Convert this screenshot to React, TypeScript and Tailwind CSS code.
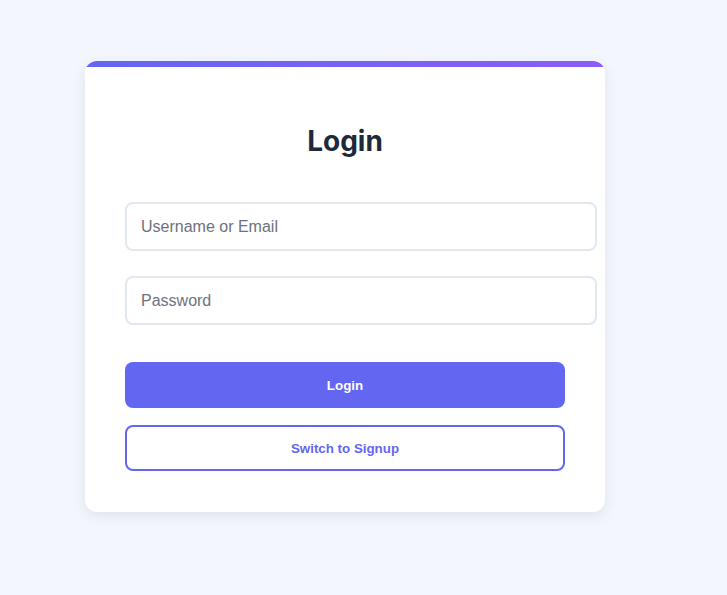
import { useState } from 'react'

export default function App() {
  const [username, setUsername] = useState('')
  const [password, setPassword] = useState('')

  return (
    <div className="min-h-[595px] w-full bg-[#f3f7fd] pl-[85px] pt-[61px] font-['Liberation_Sans',Arial,sans-serif]">
      <div className="w-[520px] overflow-hidden rounded-xl bg-white shadow-[0_4px_14px_rgba(15,23,42,0.09)]">
        <div className="h-[6px] bg-gradient-to-r from-[#6366f1] to-[#8b5cf6]" />
        <div className="px-10 pb-[41px] pt-[57px]">
          <h2 className="mb-[44px] text-center font-['Inter',sans-serif] text-[28px] font-bold leading-[34px] text-[#1e293b]">
            Login
          </h2>

          <input
            type="text"
            value={username}
            onChange={(e) => setUsername(e.target.value)}
            placeholder="Username or Email"
            className="mb-[25px] block h-[49px] w-[472px] rounded-lg border-2 border-[#e2e8f0] px-[14px] text-base text-[#1e293b] outline-none placeholder:text-[#6e7180]"
          />
          <input
            type="password"
            value={password}
            onChange={(e) => setPassword(e.target.value)}
            placeholder="Password"
            className="mb-[37px] block h-[49px] w-[472px] rounded-lg border-2 border-[#e2e8f0] px-[14px] text-base text-[#1e293b] outline-none placeholder:text-[#6e7180]"
          />

          <button
            type="button"
            className="mb-[17px] block h-[46px] w-[440px] rounded-lg bg-[#6366f1] pt-px text-[13.33px] font-bold text-white"
          >
            Login
          </button>
          <button
            type="button"
            className="block h-[46px] w-[440px] rounded-lg border-2 border-[#6366f1] bg-white pt-px text-[13.33px] font-bold text-[#6366f1]"
          >
            Switch to Signup
          </button>
        </div>
      </div>
    </div>
  )
}
